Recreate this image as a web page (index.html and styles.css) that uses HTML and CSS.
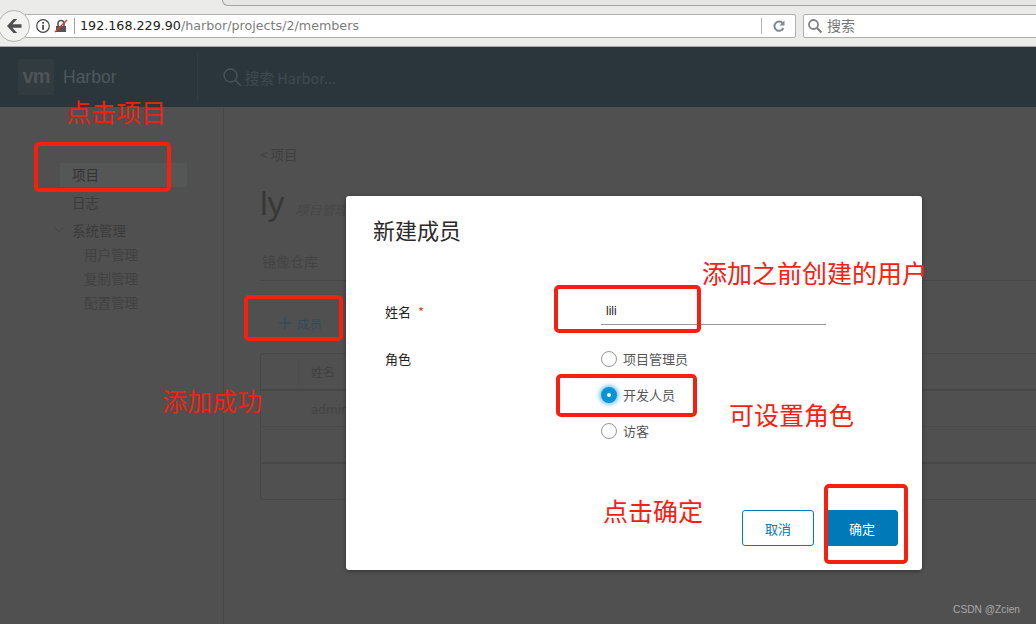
FILE: index.html
```html
<!DOCTYPE html>
<html>
<head>
    <meta charset='utf-8'>
    <title>Harbor</title>
    <meta name='viewport' content='width=device-width, initial-scale=1'>
    <link rel="stylesheet" href="styles.css">
</head>
<body>
    <div class="browser">
        <div class="tabstrip"><div class="tab"></div></div>
        <div class="toolbar">
            <button class="back">
                <svg width="20" height="20" viewBox="0 0 20 20"><path d="M9.500 3 3 10l6.500 7h3.700L8.400 11.800H17.500V8.200H8.400L13.200 3z" fill="#4f4f4f"/></svg>
            </button>
            <div class="urlbar">
                <svg class="info" width="16" height="16" viewBox="0 0 16 16"><circle cx="8" cy="8" r="6.300" fill="none" stroke="#444" stroke-width="1.200"/><rect x="7.200" y="6.800" width="1.700" height="5" fill="#444"/><rect x="7.200" y="4" width="1.700" height="1.700" fill="#444"/></svg>
                <svg class="lock" width="14" height="14" viewBox="0 0 14 14"><path d="M2 7h10v6H2z" fill="#555"/><path d="M4 7V4.500a3 3 0 0 1 6 0V7" fill="none" stroke="#555" stroke-width="1.600"/><path d="M1 13 13 1" stroke="#e8352e" stroke-width="1.400"/></svg>
                <span class="url"><b>192.168.229.90</b>/harbor/projects/2/members</span>
                <span class="reload">
                    <svg width="14" height="14" viewBox="0 0 14 14"><path d="M11.300 9a4.600 4.600 0 1 1-.6-4.600" fill="none" stroke="#7c8a98" stroke-width="2"/><path d="M12.500 1.500v5h-5z" fill="#7c8a98"/></svg>
                </span>
            </div>
            <div class="searchbar">
                <svg width="16" height="16" viewBox="0 0 16 16"><circle cx="6.500" cy="6.500" r="4.500" fill="none" stroke="#808080" stroke-width="1.800"/><path d="m10 10 4.500 4.500" stroke="#808080" stroke-width="2.200"/></svg>
                <span>搜索</span>
            </div>
        </div>
    </div>

    <div class="page">
        <header class="appbar">
            <div class="brand">
                <div class="logo">vm</div>
                <span class="product">Harbor</span>
            </div>
            <div class="appsearch">
                <svg width="20" height="20" viewBox="0 0 20 20"><circle cx="8.500" cy="8.500" r="6.500" fill="none" stroke="#4a565c" stroke-width="1.300"/><path d="m13.300 13.300 5.500 5.500" stroke="#4a565c" stroke-width="1.300"/></svg>
                <span>搜索 Harbor...</span>
            </div>
        </header>

        <div class="content">
            <nav class="sidebar">
                <a class="nav-item active">项目</a>
                <a class="nav-item">日志</a>
                <a class="nav-item group">
                    <svg width="10" height="6" viewBox="0 0 10 6"><path d="m.5.500 4.500 4.500L9.500.5" fill="none" stroke="#444" stroke-width="1"/></svg>
                    系统管理
                </a>
                <a class="nav-sub">用户管理</a>
                <a class="nav-sub">复制管理</a>
                <a class="nav-sub">配置管理</a>
            </nav>
            <main class="main">
                <div class="crumb">&lt; 项目</div>
                <div class="title"><h1>ly</h1><em>项目管理员</em></div>
                <div class="tabs">镜像仓库</div>
                <div class="add-member">
                    <svg width="12" height="12" viewBox="0 0 12 12"><path d="M6 0v12M0 6h12" stroke="#2f4c5c" stroke-width="1.400"/></svg>
                    成员
                </div>
                <div class="grid">
                    <div class="grid-head"><span class="select-cell"></span><span class="name-cell">姓名</span></div>
                    <div class="grid-row"><span class="admin">admin</span></div>
                    <div class="grid-row"></div>
                    <div class="grid-foot"></div>
                </div>
            </main>
        </div>

        <div class="modal">
            <h3>新建成员</h3>
            <div class="form-row name-row">
                <label>姓名 <i>*</i></label>
                <div class="field">lili</div>
            </div>
            <div class="form-row role-row">
                <label>角色</label>
                <div class="radios">
                    <div class="radio"><span class="dot"></span>项目管理员</div>
                    <div class="radio"><span class="dot on"></span>开发人员</div>
                    <div class="radio"><span class="dot"></span>访客</div>
                </div>
            </div>
            <div class="actions">
                <button class="btn outline">取消</button>
                <button class="btn primary">确定</button>
            </div>
        </div>

        <div class="mark mark-project"></div>
        <div class="mark mark-member"></div>
        <div class="mark mark-name"></div>
        <div class="mark mark-role"></div>
        <div class="mark mark-ok"></div>
        <div class="note note-project">点击项目</div>
        <div class="note note-added">添加成功</div>
        <div class="note note-user">添加之前创建的用户</div>
        <div class="note note-role">可设置角色</div>
        <div class="note note-ok">点击确定</div>
        <div class="watermark">CSDN @Zcien</div>
    </div>
</body>
</html>
```

FILE: styles.css
```css
* {
    margin: 0;
    padding: 0;
    box-sizing: border-box;
}

body {
    width: 1036px;
    height: 624px;
    overflow: hidden;
    font-family: "Noto Sans CJK SC", "Liberation Sans", sans-serif;
    background: #505050;
}

/* browser */
.browser {
    height: 47px;
    background: #ebebea;
    border-bottom: 1px solid #a9a9a7;
}
.tabstrip {
    height: 6px;
    padding-left: 222px;
}
.tab {
    height: 6px;
    background: #e6e6e5;
    border-left: 1px solid #9b9fa3;
    border-bottom: 1px solid #a3a5a7;
    border-bottom-left-radius: 8px;
}
.toolbar {
    height: 40px;
    display: flex;
    align-items: center;
}
.back {
    flex-shrink: 0;
    width: 32px;
    height: 32px;
    margin-left: -2px;
    margin-right: -5px;
    border: 1px solid #b2b2b0;
    border-radius: 50%;
    background: #f2f2f1;
    display: flex;
    align-items: center;
    justify-content: center;
    position: relative;
    z-index: 1;
}
.urlbar {
    flex-shrink: 0;
    width: 771px;
    height: 24px;
    background: #fff;
    border: 1px solid #b0b0ae;
    border-radius: 0 2px 2px 0;
    display: flex;
    align-items: center;
    padding-left: 9px;
}
.lock { margin-left: 3px; }
.url {
    margin-left: 6px;
    padding-left: 5px;
    border-left: 1px solid #a0a0a0;
    font-family: "DejaVu Sans", sans-serif;
    font-size: 12.700px;
    line-height: 16px;
    color: #7d7d7d;
    flex: 1;
    white-space: nowrap;
}
.url b {
    font-weight: normal;
    color: #222;
}
.reload {
    width: 34px;
    height: 16px;
    border-left: 1px solid #b0b0ae;
    display: flex;
    align-items: center;
    justify-content: center;
}
.searchbar {
    flex-shrink: 0;
    width: 240px;
    height: 24px;
    margin-left: 7px;
    background: #fff;
    border: 1px solid #b0b0ae;
    border-radius: 2px;
    display: flex;
    align-items: center;
    gap: 4px;
    padding-left: 3px;
    font-size: 14px;
    color: #757575;
}
.searchbar span { padding-bottom: 3px; }

/* harbor page, already dimmed by the dialog backdrop */
.page {
    position: relative;
    height: 577px;
}
.appbar {
    height: 60px;
    background: #2b363c;
    display: flex;
    align-items: center;
}
.brand {
    width: 198px;
    height: 48px;
    padding-left: 18px;
    display: flex;
    align-items: center;
    border-right: 1px solid #323d43;
}
.logo {
    width: 36px;
    height: 36px;
    background: #323b40;
    border-radius: 3px;
    color: #4d5558;
    font-family: "Liberation Sans", sans-serif;
    font-weight: bold;
    font-size: 20px;
    line-height: 34px;
    text-align: center;
    letter-spacing: -1px;
}
.product {
    margin-left: 9px;
    font-family: "Liberation Sans", sans-serif;
    font-size: 17.500px;
    color: #4d585d;
}
.appsearch {
    margin-left: 24px;
    display: flex;
    align-items: center;
    gap: 3px;
    font-size: 14.500px;
    color: #3f4a50;
}
.content {
    display: flex;
    height: 517px;
}
.sidebar {
    width: 224px;
    flex-shrink: 0;
    padding: 56px 36px 0 60px;
    border-right: 1px solid #484848;
    display: flex;
    flex-direction: column;
    font-size: 13.500px;
    color: #3b3b3b;
}
.nav-item {
    height: 24px;
    line-height: 22px;
    padding-left: 12px;
    margin-bottom: 4px;
    position: relative;
}
.nav-item.active {
    background: #555656;
    color: #333;
}
.nav-item.group svg {
    position: absolute;
    left: -6px;
    top: 8px;
}
.nav-sub {
    height: 24px;
    line-height: 22px;
    padding-left: 24px;
    color: #414141;
}
.nav-item.group { margin-bottom: 0; }
.main {
    flex: 1;
    padding: 38px 0 0 36px;
    min-width: 0;
}
.crumb {
    font-size: 13.500px;
    line-height: 18px;
    color: #3f3f3f;
}
.title {
    display: flex;
    align-items: baseline;
    gap: 11px;
    height: 50px;
    margin-top: 15px;
}
.title h1 {
    font-family: "Liberation Sans", sans-serif;
    font-weight: normal;
    font-size: 34px;
    line-height: 50px;
    color: #383838;
}
.title em {
    font-size: 13px;
    color: #474747;
}
.tabs {
    margin-top: 17px;
    height: 36px;
    padding: 6px 0 0 2px;
    border-bottom: 1px solid #464646;
    font-size: 14px;
    line-height: 20px;
    color: #434343;
}
.add-member {
    margin-top: 31px;
    height: 22px;
    padding-left: 19px;
    display: flex;
    align-items: center;
    gap: 6px;
    font-size: 12.500px;
    color: #2f4c5c;
}
.grid {
    margin-top: 19px;
    border: 1px solid #484848;
    border-right: 0;
    border-radius: 3px 0 0 3px;
    height: 147px;
    font-size: 12px;
    color: #404040;
}
.grid-head {
    height: 37px;
    border-bottom: 2px solid #474747;
    display: flex;
    align-items: center;
}
.select-cell {
    width: 38px;
    height: 26px;
    border-right: 1px solid #4b4b4b;
}
.name-cell { margin-left: 12px; }
.grid-row {
    height: 36px;
    line-height: 35px;
    border-bottom: 1px solid #4a4a4a;
    padding-left: 50px;
}
.grid-row + .grid-row {
    height: 37px;
    border-bottom: 2px solid #474747;
}
.admin {
    font-family: "DejaVu Sans", sans-serif;
    color: #434343;
}

/* dialog */
.modal {
    position: absolute;
    left: 346px;
    top: 149px;
    width: 576px;
    height: 374px;
    background: #fff;
    border-radius: 3px;
    box-shadow: 0 1px 4px rgba(0, 0, 0, 0.4);
    padding: 17px 24px 0 27px;
    display: flex;
    flex-direction: column;
}
.modal h3 {
    font-weight: normal;
    font-size: 22px;
    line-height: 32px;
    color: #2b2b2b;
}
.form-row {
    display: flex;
    font-size: 13px;
    color: #222;
}
.form-row label {
    width: 216px;
    padding-left: 12px;
}
.form-row label i {
    margin-left: 4px;
    font-style: normal;
    color: #d8492f;
}
.name-row {
    margin-top: 53px;
    line-height: 22px;
    align-items: center;
}
.field {
    width: 225px;
    height: 27px;
    margin-left: 12px;
    padding-left: 5px;
    border-bottom: 1px solid #9a9a9a;
    font-family: "Liberation Sans", sans-serif;
    font-size: 12px;
    line-height: 26px;
}
.role-row {
    margin-top: 23px;
    line-height: 22px;
}
.radios {
    margin-left: 12px;
    display: flex;
    flex-direction: column;
    gap: 14px;
}
.radio {
    display: flex;
    align-items: center;
    gap: 6px;
    height: 22px;
    font-size: 13px;
    color: #565656;
}
.dot {
    width: 16px;
    height: 16px;
    border: 1px solid #9a9a9a;
    border-radius: 50%;
    background: #fff;
}
.dot.on {
    border: 6px solid #0a94d6;
    box-shadow: 0 0 4px 2px #7cc8ee;
}
.actions {
    margin-top: auto;
    margin-bottom: 24px;
    display: flex;
    justify-content: flex-end;
    gap: 12px;
}
.btn {
    width: 72px;
    height: 36px;
    border-radius: 3px;
    font-family: inherit;
    font-size: 13px;
}
.outline {
    background: #fff;
    border: 1px solid #0079b8;
    color: #0079b8;
}
.primary {
    background: #0079b8;
    border: 1px solid #0079b8;
    color: #fff;
}

/* red annotations drawn on top of the screenshot */
.mark {
    position: absolute;
    border: 4px solid #f5200f;
    border-radius: 5px;
}
.mark-project { left: 34px; top: 95px; width: 137px; height: 50px; }
.mark-member { left: 244px; top: 248px; width: 99px; height: 46px; }
.mark-name { left: 554px; top: 238px; width: 147px; height: 48px; }
.mark-role { left: 556px; top: 327px; width: 141px; height: 43px; }
.mark-ok { left: 824px; top: 437px; width: 84px; height: 80px; }
.note {
    position: absolute;
    color: #f5200f;
    font-size: 25px;
    line-height: 32px;
    white-space: nowrap;
}
.note-project { left: 66px; top: 48px; }
.note-added { left: 162px; top: 337px; }
.note-user { left: 702px; top: 209px; }
.note-role { left: 729px; top: 351px; }
.note-ok { left: 603px; top: 447px; }
.watermark {
    position: absolute;
    right: 16px;
    bottom: 9px;
    font-family: "Liberation Sans", sans-serif;
    font-size: 10.200px;
    color: #a8a8a8;
}
```
